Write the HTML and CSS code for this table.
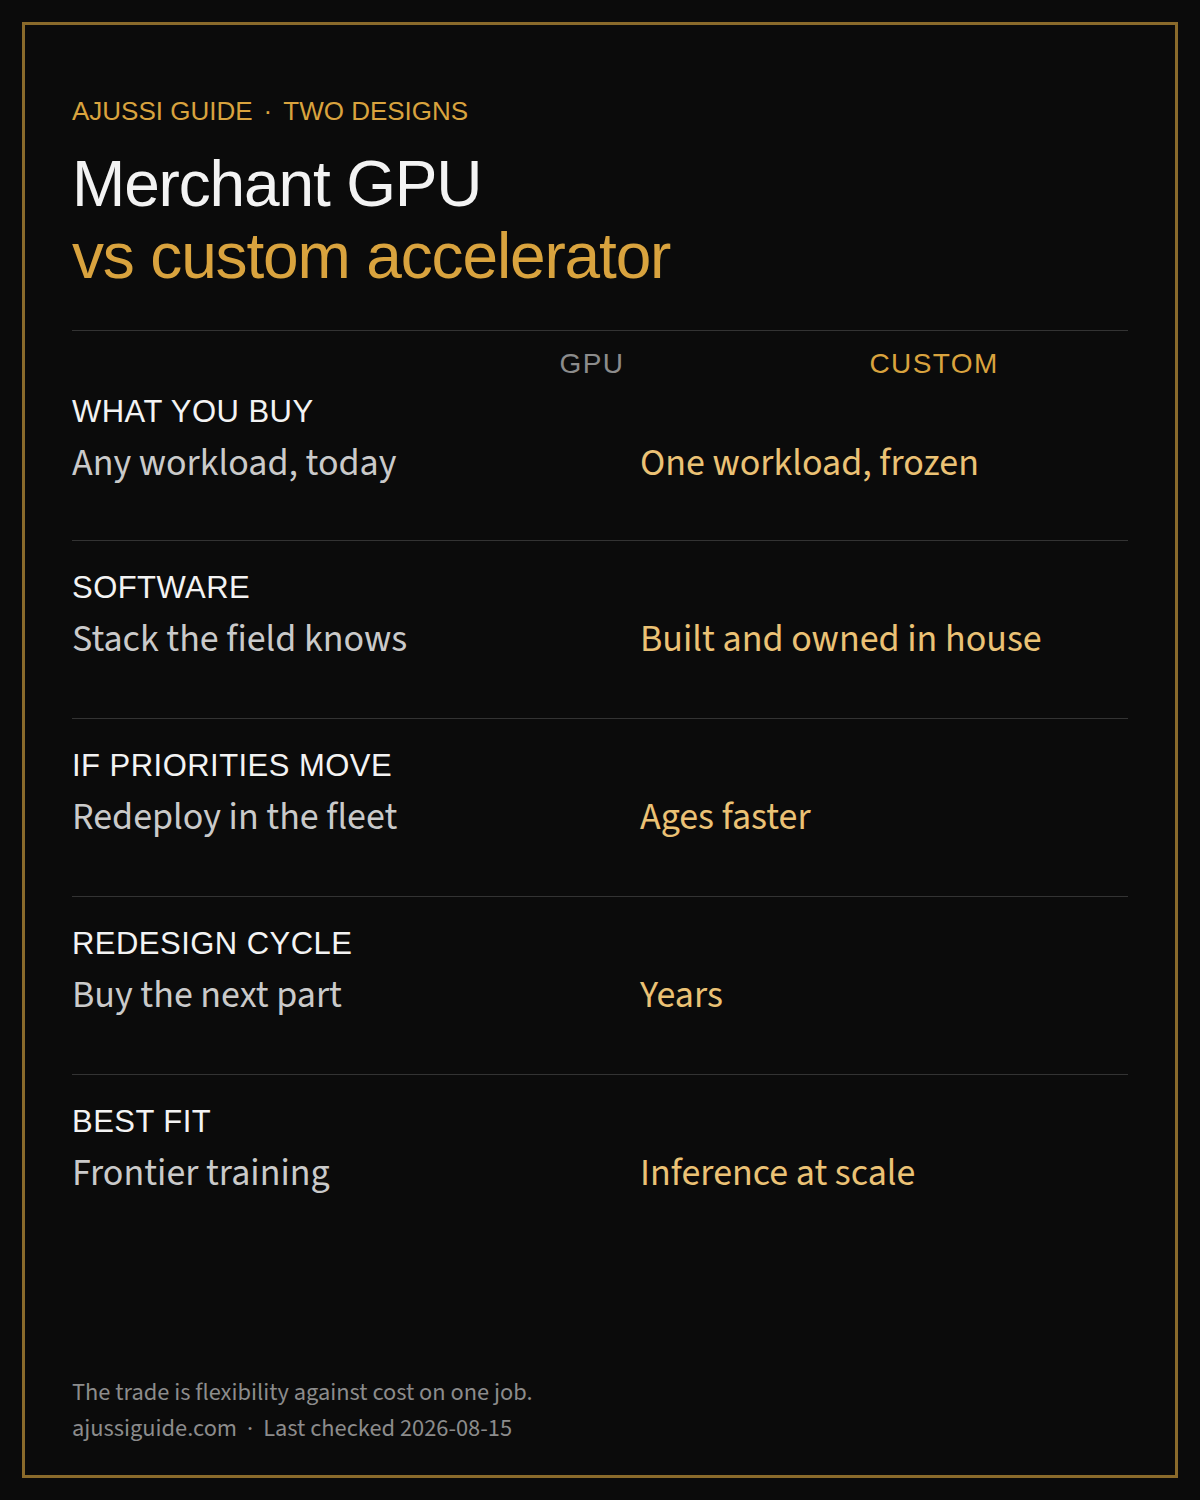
FILE: index.html
```html
<html><head><meta charset="UTF-8">
<meta name="viewport" content="width=device-width, initial-scale=1.0">
<title>Merchant GPU vs custom accelerator</title>
<link rel="stylesheet" href="styles.css">
</head>
<body>
    <div class="card">
        <div class="eyebrow">AJUSSI GUIDE<span class="sep">·</span>TWO DESIGNS</div>
        <h1 class="title">Merchant GPU<br><span class="accent">vs custom accelerator</span></h1>

        <div class="compare">
            <div class="compare-head">
                <span></span>
                <span class="head-gpu">GPU</span>
                <span class="head-custom">CUSTOM</span>
            </div>

            <div class="row first">
                <div class="label">WHAT YOU BUY</div>
                <div class="values">
                    <div class="gpu">Any workload, today</div>
                    <div class="custom">One workload, frozen</div>
                </div>
            </div>
            <div class="row">
                <div class="label">SOFTWARE</div>
                <div class="values">
                    <div class="gpu">Stack the field knows</div>
                    <div class="custom">Built and owned in house</div>
                </div>
            </div>
            <div class="row">
                <div class="label">IF PRIORITIES MOVE</div>
                <div class="values">
                    <div class="gpu">Redeploy in the fleet</div>
                    <div class="custom">Ages faster</div>
                </div>
            </div>
            <div class="row">
                <div class="label">REDESIGN CYCLE</div>
                <div class="values">
                    <div class="gpu">Buy the next part</div>
                    <div class="custom">Years</div>
                </div>
            </div>
            <div class="row">
                <div class="label">BEST FIT</div>
                <div class="values">
                    <div class="gpu">Frontier training</div>
                    <div class="custom">Inference at scale</div>
                </div>
            </div>
        </div>

        <div class="footer">
            <p>The trade is flexibility against cost on one job.</p>
            <p>ajussiguide.com<span class="sep">·</span>Last checked 2026-08-15</p>
        </div>
    </div>
</body>
</html>
```

FILE: styles.css
```css
:root {
    --bg: #0b0b0b;
    --frame: #8a6a2b;
    --gold: #d9a33e;
    --gold-soft: #ebc275;
    --text: #f3f3f3;
    --text-soft: #cacaca;
    --muted: #8c8c8c;
    --rule: #333333;
    --sans: 'Liberation Sans', Arial, sans-serif;
    --body: 'Source Sans 3', 'Source Sans Pro', 'Noto Sans', sans-serif;
}

html, body {
    margin: 0;
    padding: 0;
    background-color: var(--bg);
}

body {
    padding: 22px;
    height: 1500px;
    box-sizing: border-box;
}

.card {
    height: 100%;
    box-sizing: border-box;
    border: 3px solid var(--frame);
    padding: 70px 47px 28px;
    display: flex;
    flex-direction: column;
}

.eyebrow {
    font-family: var(--sans);
    font-size: 26px;
    line-height: 32px;
    color: var(--gold);
}

.eyebrow .sep {
    margin: 0 11px;
}

.title {
    margin: 21px 0 0;
    font-family: var(--sans);
    font-weight: 400;
    font-size: 64px;
    line-height: 72px;
    letter-spacing: -0.018em;
    color: var(--text);
}

.title .accent {
    color: var(--gold);
}

.compare {
    margin-top: 38px;
    border-top: 1px solid var(--rule);
}

.compare-head {
    display: grid;
    grid-template-columns: 1fr 128px 300px;
    column-gap: 128px;
    padding: 16px 44px 0 0;
    font-family: var(--sans);
    font-size: 28px;
    line-height: 34px;
    letter-spacing: 0.05em;
    text-align: center;
}

.head-gpu {
    color: var(--muted);
}

.head-custom {
    color: var(--gold);
}

.row {
    padding: 29px 0 56px;
    border-top: 1px solid var(--rule);
}

.row.first {
    padding-top: 13px;
    padding-bottom: 54px;
    border-top: none;
}

.label {
    font-family: var(--sans);
    font-size: 31px;
    line-height: 36px;
    letter-spacing: 0.015em;
    color: var(--text);
}

.values {
    display: grid;
    grid-template-columns: 1fr 1fr;
    column-gap: 80px;
    margin-top: 10px;
    font-family: var(--body);
    font-size: 38px;
    line-height: 46px;
}

.gpu {
    color: var(--text-soft);
}

.custom {
    color: var(--gold-soft);
}

.footer {
    margin-top: auto;
    font-family: var(--body);
    font-size: 24.4px;
    line-height: 36px;
    color: var(--muted);
}

.footer p {
    margin: 0;
}

.footer .sep {
    margin: 0 10px;
}
```
